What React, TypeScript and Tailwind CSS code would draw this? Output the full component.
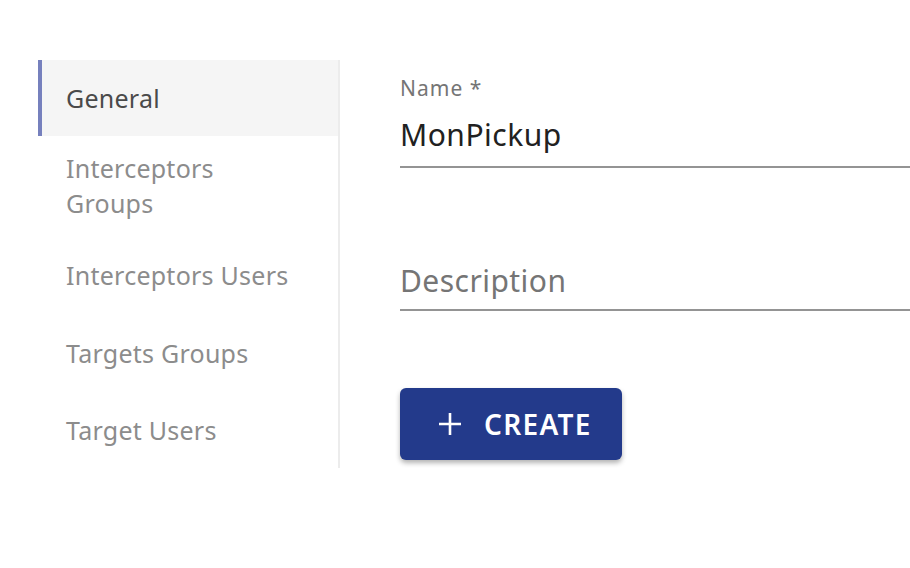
import React from 'react';

const navItems = [
    { label: 'General', active: true, h: 'h-[76px]' },
    { label: 'Interceptors Groups', active: false, h: 'h-[100px]', wrap: true },
    { label: 'Interceptors Users', active: false, h: 'h-[78px]' },
    { label: 'Targets Groups', active: false, h: 'h-[78px]' },
    { label: 'Target Users', active: false, h: 'h-[76px]' },
];

const App: React.FC = () => {
    return (
        <div className="w-[910px] h-[568px] bg-white overflow-hidden flex pt-[60px] pl-[38px]" style={{ fontFamily: '"Noto Sans", "Open Sans", sans-serif' }}>
            {/* side tabs */}
            <div className="w-[302px] shrink-0 self-start border-r-2 border-[#ececec]">
                {navItems.map(item => (
                    <div
                        key={item.label}
                        className={`${item.h} flex items-center pl-[24px] border-l-4 ${item.active ? 'border-[#7680bd] bg-[#f5f5f5] text-[#4a4a4a]' : 'border-transparent text-[#8c8c8c]'}`}
                    >
                        <span className={`text-[25px] leading-[35px] tracking-[0.25px] ${item.wrap ? 'w-[180px]' : ''}`}>{item.label}</span>
                    </div>
                ))}
            </div>

            {/* form */}
            <div className="flex-1 pl-[60px] pt-[14px]">
                <div className="border-b-2 border-[#949494] pb-[11px]">
                    <div className="text-[21px] leading-[28px] tracking-[1px] text-[#757575]">Name *</div>
                    <div className="text-[30px] leading-[40px] mt-[13px] tracking-[0.5px] text-[#212121]">MonPickup</div>
                </div>

                <div className="mt-[93px] border-b-2 border-[#949494] pb-[8px]">
                    <div className="text-[30px] leading-[40px] tracking-[0.45px] text-[#757575]">Description</div>
                </div>

                <button className="mt-[77px] w-[222px] h-[72px] rounded-[6px] bg-[#233a8b] shadow-[0_3px_5px_rgba(0,0,0,0.3)] flex items-center pl-[38px] gap-[22px] text-white">
                    <svg width="24" height="24" viewBox="0 0 24 24" fill="none" stroke="currentColor" strokeWidth="2.6">
                        <path d="M12 1v22M1 12h22" />
                    </svg>
                    <span className="text-[28px] font-semibold leading-none tracking-[1.3px]">CREATE</span>
                </button>
            </div>
        </div>
    );
};

export default App;
